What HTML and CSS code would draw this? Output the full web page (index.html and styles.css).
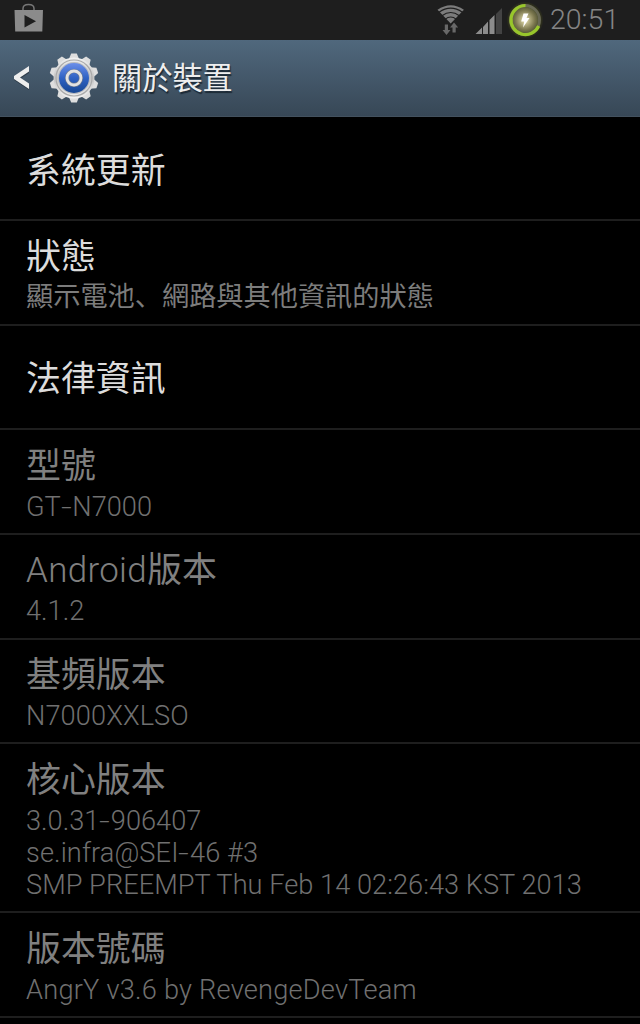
FILE: index.html
```html
<!DOCTYPE html>
<html lang="zh-Hant">
<head>
<meta charset="utf-8">
<title>關於裝置</title>
<link rel="stylesheet" href="styles.css">
</head>
<body>
<div class="status-bar">
  <svg class="store" width="30" height="30" viewBox="0 0 30 30">
    <path d="M9 7V5.500Q9 1.500 14.500 1.500T20 5.500V7" fill="none" stroke="#777" stroke-width="1.500"/>
    <path d="M.5 7H29L28.300 28.500H1.200Z" fill="#8b8b8b"/>
    <path d="M10.500 12V24.500L22 18.200Z" fill="#1e1e1e"/>
  </svg>
  <svg class="signals" width="115" height="40" viewBox="-5 0 115 40">
    <defs>
      <radialGradient id="glow"><stop offset="0" stop-color="#f6efba"/><stop offset=".35" stop-color="#b5af82"/><stop offset=".75" stop-color="#7b774e"/><stop offset="1" stop-color="#5b5c3b"/></radialGradient>
      <radialGradient id="halo"><stop offset=".7" stop-color="#4a4e1b"/><stop offset="1" stop-color="#1e1e1e"/></radialGradient>
    </defs>
    <path d="M-2.500 9.800Q10.700 .8 23.900 9.800L10.700 23.500Z" fill="#7c7c7c"/>
    <g fill="none" stroke="#1e1e1e" stroke-width="1.100">
      <path d="M-1 12.200Q10.700 4 22.400 12.200"/>
      <path d="M2 15.800Q10.700 9.200 19.400 15.800"/>
      <path d="M5 19.300Q10.700 14.600 16.400 19.300"/>
    </g>
    <path d="M4.800 24.500H8V30H10.500L6.500 35L2.500 30H4.800ZM12.500 32.500H15.700V27.500H18.200L14 22.500L10 27.500H12.500Z" fill="#686868" stroke="#1e1e1e" stroke-width="1" paint-order="stroke"/>
    <path d="M35.500 34L42 27.500V34ZM43 27L48 21.500V34H43ZM49.500 20L54.500 15V34H49.500Z" fill="#8c8c8c"/>
    <path d="M56 34V14L62 8V34Z" fill="#434343"/>
    <circle cx="85" cy="20" r="18.500" fill="url(#halo)"/>
    <circle cx="85" cy="20" r="13" fill="url(#glow)"/>
    <circle cx="85" cy="20" r="14.500" fill="none" stroke="#696955" stroke-width="3"/>
    <path d="M85.500 5.500A14.500 14.500 0 1 0 98.700 26" fill="none" stroke="#98c62b" stroke-width="3.200"/>
    <path d="M83.500 13.500H88.500L86.500 18H89.500L83 27.500L84.200 21.500H81.200Z" fill="#fff"/>
  </svg>
  <span class="clock">20:51</span>
</div>
<div class="header">
  <svg class="back" width="18" height="28" viewBox="0 0 18 28"><path d="M16 3.500V9L7.500 14.500L16 20.500V26L1 16V13.500Z" fill="#222c36" opacity=".6"/><path d="M16 2V7.500L7 13.500L16 19.500V25L1 15V12Z" fill="#eee"/></svg>
  <svg class="gear" width="52" height="52" viewBox="-26 -26 52 52">
    <defs>
      <linearGradient id="metal" x1="0" y1="0" x2="0" y2="1"><stop offset="0" stop-color="#f2f2f2"/><stop offset=".5" stop-color="#c5c5c5"/><stop offset="1" stop-color="#f2f2f2"/></linearGradient>
      <linearGradient id="blue" x1="0" y1="0" x2="0" y2="1"><stop offset="0" stop-color="#6c8fe9"/><stop offset=".5" stop-color="#2f62c4"/><stop offset="1" stop-color="#174793"/></linearGradient>
      <path id="tooth" d="M-5.500-18L-2.800-24.500H2.800L5.500-18Z"/>
    </defs>
    <g fill="#dedede">
      <use href="#tooth"/><use href="#tooth" transform="rotate(36)"/><use href="#tooth" transform="rotate(72)"/><use href="#tooth" transform="rotate(108)"/><use href="#tooth" transform="rotate(144)"/><use href="#tooth" transform="rotate(180)"/><use href="#tooth" transform="rotate(216)"/><use href="#tooth" transform="rotate(252)"/><use href="#tooth" transform="rotate(288)"/><use href="#tooth" transform="rotate(324)"/>
    </g>
    <circle r="20.500" fill="url(#metal)"/>
    <circle r="18" fill="none" stroke="#aaa" stroke-width="1.200"/>
    <circle r="16" fill="#b8bbc0"/>
    <circle r="15" fill="url(#blue)"/>
    <circle r="7" fill="none" stroke="#707c91" stroke-width="4.200"/>
    <circle r="7" fill="none" stroke="#e2e2e2" stroke-width="2.800"/>
  </svg>
  <h1 class="heading">關於裝置</h1>
</div>
<ul class="list">
  <li class="row first"><div class="title">系統更新</div></li>
  <li class="row status"><div class="title">狀態</div><div class="summary cjk">顯示電池<span class="comma" lang="ja">、</span>網路與其他資訊的狀態</div></li>
  <li class="row"><div class="title">法律資訊</div></li>
  <li class="row off"><div class="title">型號</div><div class="summary">GT<span class="hyphen">-</span>N7000</div></li>
  <li class="row off"><div class="title"><span class="latin">Android</span>版本</div><div class="summary">4.1.2</div></li>
  <li class="row off"><div class="title">基頻版本</div><div class="summary baseband">N7000XXLSO</div></li>
  <li class="row off tall"><div class="title">核心版本</div><div class="summary">3.0.31<span class="hyphen">-</span>906407<br><span class="host">se.infra@SEI<span class="hyphen">-</span>46 #3</span><br><span class="date">SMP PREEMPT Thu Feb 14 02:26:43 KST 2013</span></div></li>
  <li class="row off"><div class="title">版本號碼</div><div class="summary build">AngrY v3.6 by RevengeDevTeam</div></li>
</ul>
</body>
</html>
```
FILE: styles.css
```css
* { box-sizing: border-box; }
body {
  margin: 0;
  width: 640px;
  height: 1024px;
  overflow: hidden;
  background: #000;
  font-family: Roboto, "Noto Sans CJK TC", sans-serif;
  font-weight: 300;
}
.status-bar {
  display: flex;
  align-items: center;
  height: 40px;
  padding: 0 22px 0 14px;
  background: #1e1e1e;
}
.store { margin-bottom: 4px; }
.signals { margin-left: auto; }
.clock {
  width: 68px;
  font-size: 28.500px;
  line-height: 40px;
  color: #858585;
  white-space: nowrap;
}
.header {
  display: flex;
  align-items: center;
  height: 77px;
  padding-left: 13px;
  background: linear-gradient(#50687d, #374756);
  border-bottom: 1px solid #43515e;
}
.gear { margin-left: 17px; }
.heading {
  margin: 2px 0 0 12px;
  font-size: 30.2px;
  line-height: 44px;
  font-weight: 400;
  color: #eee;
  text-shadow: 1px 2px 1px #1c2935;
}
.list { margin: 0; padding: 0; list-style: none; }
.row {
  display: flex;
  flex-direction: column;
  justify-content: center;
  height: 104.67px;
  padding: 7px 0 0 26px;
  border-bottom: 2px solid #1e1e1e;
}
.first { height: 104px; }
.status { padding-top: 5px; }
.off { padding-top: 4px; }
.tall { height: 169px; }
.title {
  font-size: 34.9px;
  line-height: 44px;
  font-weight: 400;
  color: #dcdcdc;
}
.latin { font-weight: 300; letter-spacing: .35px; }
.summary {
  font-size: 27.2px;
  line-height: 32px;
  margin-top: 2px;
  color: #777;
  white-space: nowrap;
}
.cjk { margin-top: 1px; font-weight: 400; color: #7c7c7c; }
.comma { font-family: "Noto Sans CJK JP", sans-serif; line-height: 1; }
.hyphen {
  display: inline-block;
  width: 11.5px;
  transform: scaleX(1.4);
  transform-origin: left;
}
.row .summary .hyphen { letter-spacing: 0; }
.baseband { letter-spacing: .1px; }
.host { letter-spacing: .1px; }
.date { letter-spacing: .03px; }
.build { letter-spacing: .22px; }
.off .title { color: #808080; }
.off .summary { color: #707070; }
```
